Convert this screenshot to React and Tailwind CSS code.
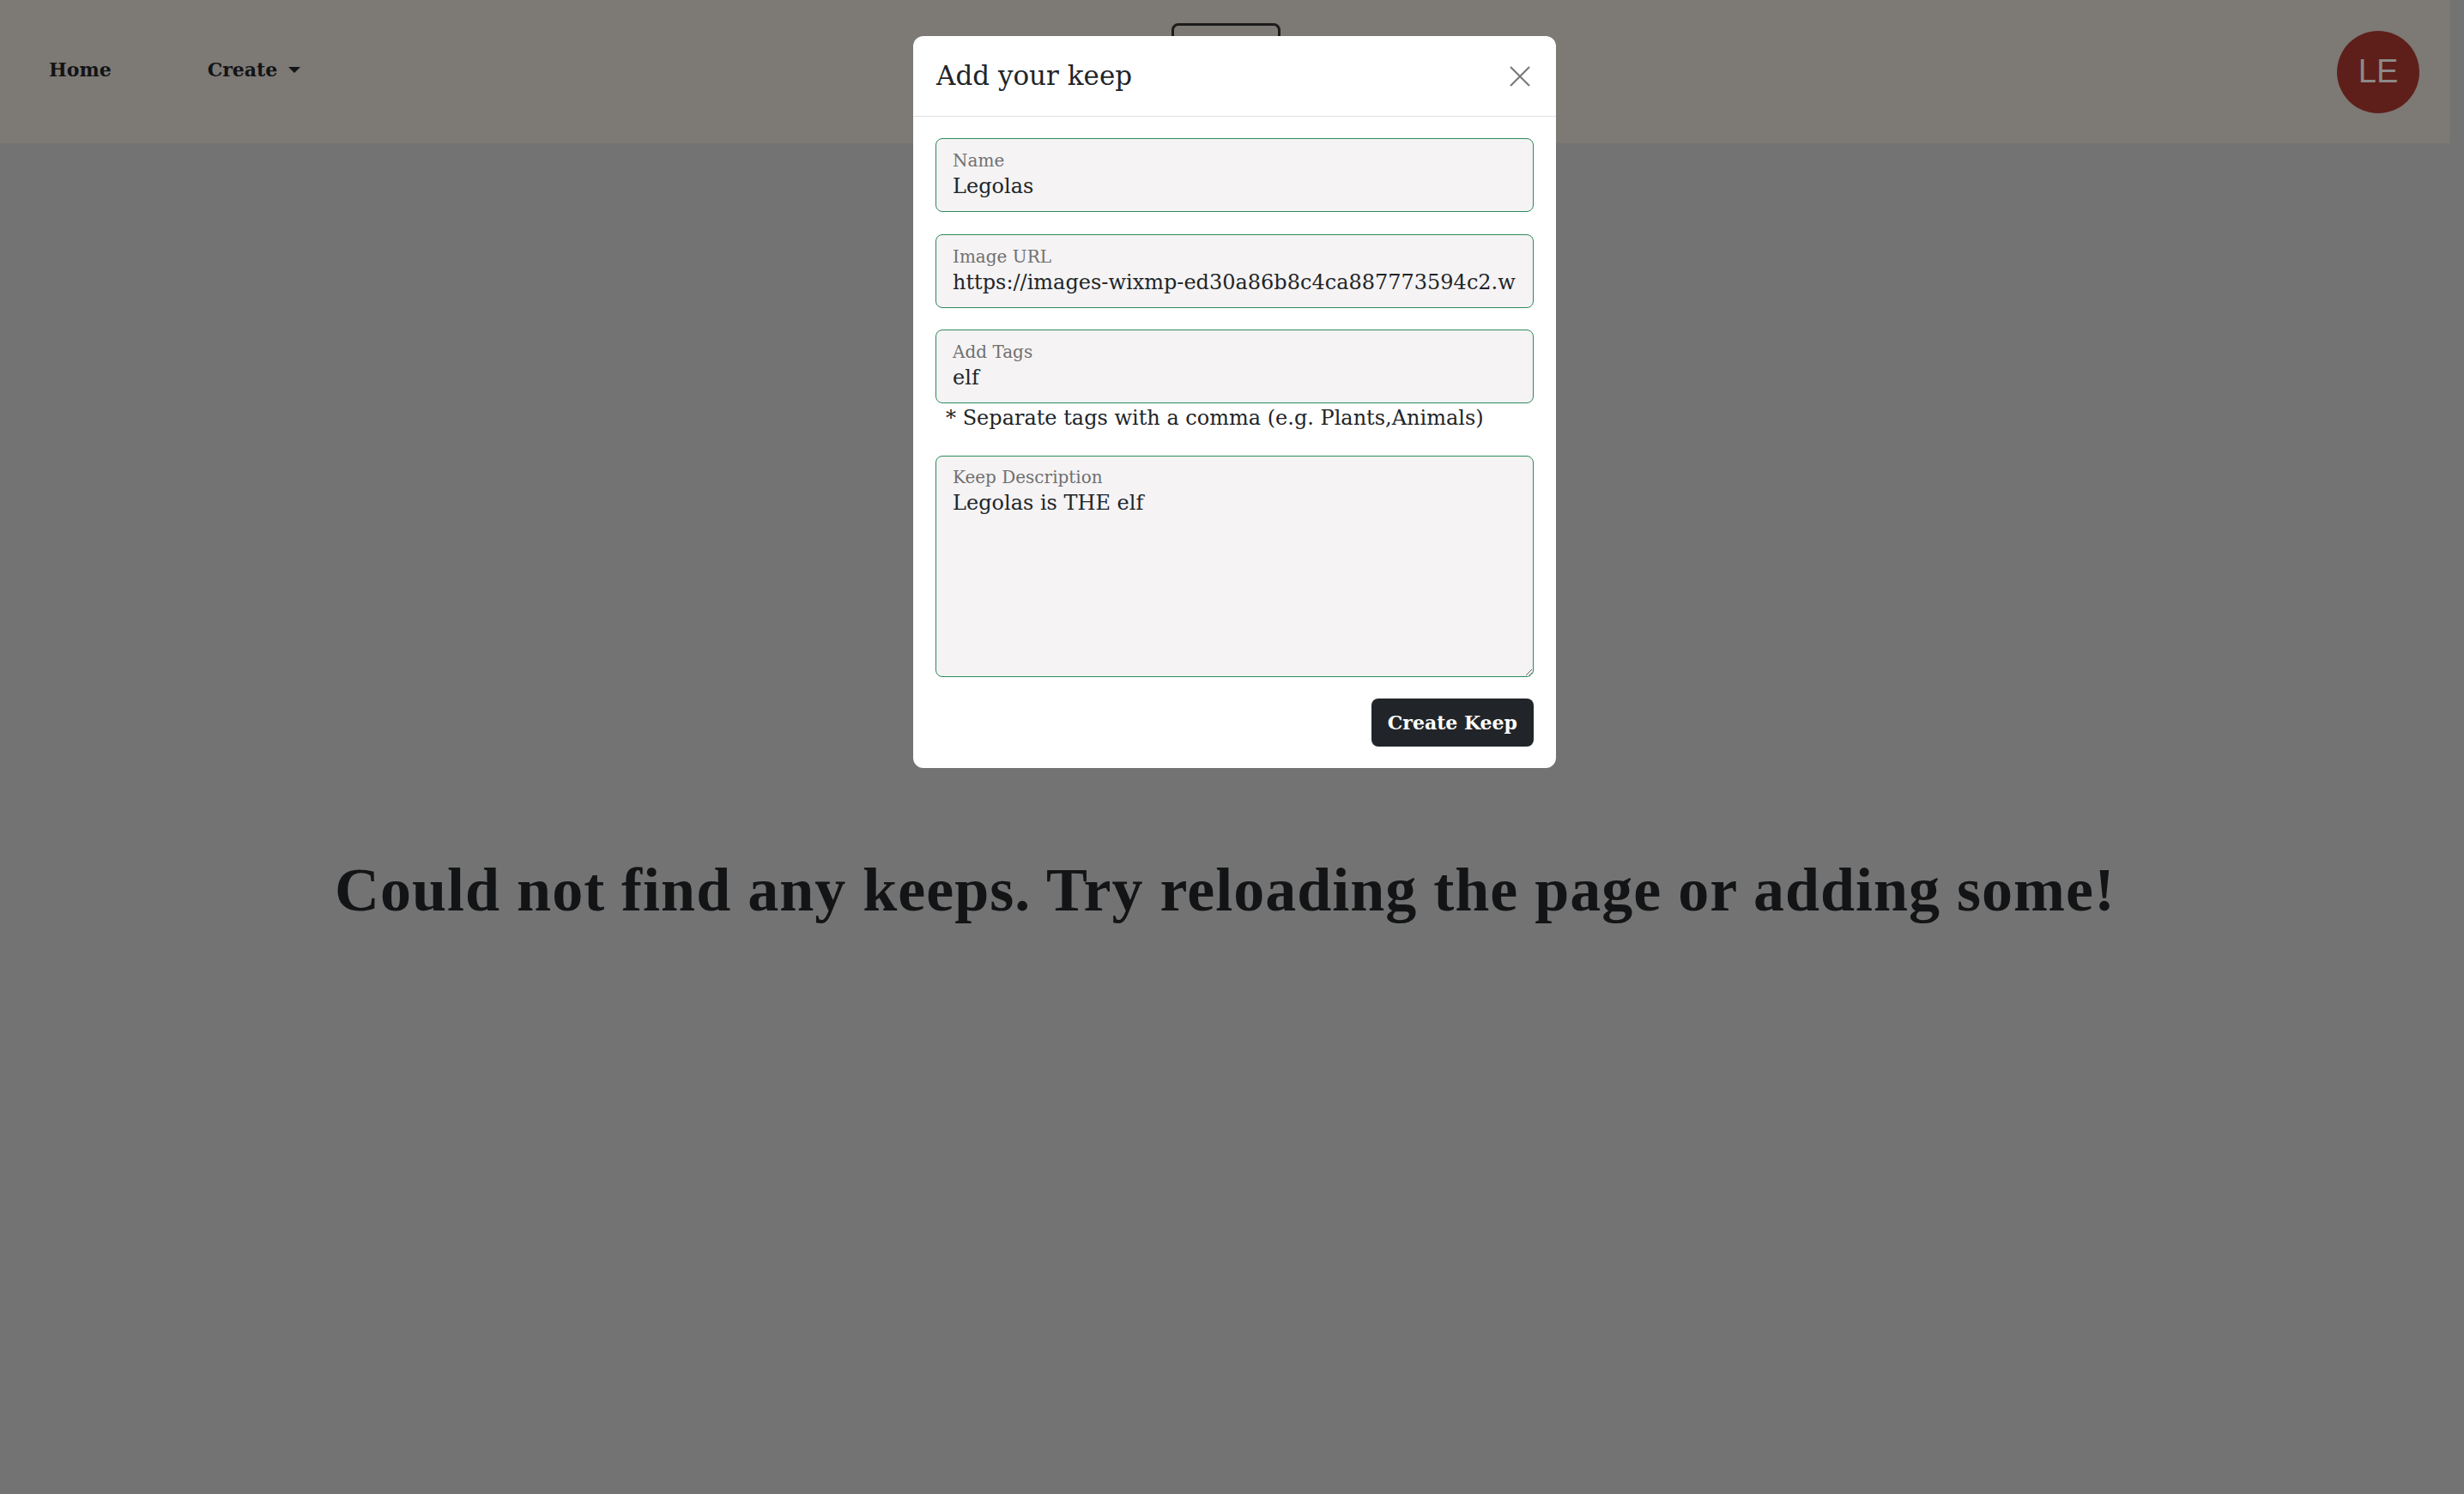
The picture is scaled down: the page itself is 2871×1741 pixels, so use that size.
import React from 'react'

const serif = { fontFamily: '"DejaVu Serif", "Liberation Serif", serif' }

const FloatingInput = ({ label, value }) => {
  return (
    <div className="relative h-[86px] w-full rounded-[8px] border border-[#2f8a5a] bg-[#f5f3f4]">
      <label className="absolute left-[19px] top-[13px] text-[20px] leading-[24px] text-[#707070]">
        {label}
      </label>
      <div className="absolute left-[19px] right-[19px] top-[39px] overflow-hidden whitespace-nowrap text-[24px] leading-[32px] text-[#212529]">
        {value}
      </div>
    </div>
  )
}

const App = () => {
  return (
    <div className="relative min-h-screen w-full bg-[#737373] text-[#121416]" style={serif}>
      <div className="w-[calc(100%-16px)]">
        {/* Navbar */}
        <nav className="relative flex h-[167px] items-center bg-[#7d7975] pb-[4px] pl-[57px] pr-[36px]">
          <a className="text-[22px] font-bold text-[#121416]">Home</a>
          <div className="ml-[112px] flex items-center gap-[13px]">
            <span className="text-[22px] font-bold text-[#121416]">Create</span>
            <svg width="14" height="7" viewBox="0 0 14 7">
              <path d="M0 0 L14 0 L7 7 Z" fill="#121416" />
            </svg>
          </div>
          <div className="flex flex-1 justify-center pr-[216px]">
            <div className="mt-[4px] h-[113px] w-[127px] rounded-[8px] border-[3px] border-[#1c1c1c]" />
          </div>
          <div className="mt-[4px] flex h-[96px] w-[96px] items-center justify-center rounded-full bg-[#5e1f1a]">
            <span className="text-[38px] text-[#8c8a88]" style={{ fontFamily: '"Liberation Sans", Arial, sans-serif' }}>
              LE
            </span>
          </div>
        </nav>

        {/* Empty state */}
        <main className="flex justify-center pt-[834px] pb-[600px]">
          <h1
            className="text-[72px] font-bold leading-none tracking-[1px] text-[#121416]"
            style={{ fontFamily: '"Liberation Serif", "DejaVu Serif", serif' }}
          >
            Could not find any keeps. Try reloading the page or adding some!
          </h1>
        </main>
      </div>

      {/* Modal */}
      <div className="absolute left-[1064px] top-[42px] w-[749px] rounded-[12px] bg-white">
        <div className="flex h-[94px] items-center justify-between border-b border-[#dee2e6] px-[27px]">
          <h5 className="text-[31px] leading-none text-[#212529]">Add your keep</h5>
          <button className="flex h-[30px] w-[30px] items-center justify-center">
            <svg width="24" height="24" viewBox="0 0 24 24">
              <path d="M1 1 L23 23 M23 1 L1 23" stroke="#7a7a7a" strokeWidth="2.2" />
            </svg>
          </button>
        </div>
        <div className="flex flex-col px-[26px] pt-[25px] pb-[25px]">
          <FloatingInput label="Name" value="Legolas" />
          <div className="mt-[26px]">
            <FloatingInput label="Image URL" value="https://images-wixmp-ed30a86b8c4ca887773594c2.w" />
          </div>
          <div className="mt-[25px]">
            <FloatingInput label="Add Tags" value="elf" />
          </div>
          <p className="mt-[2px] pl-[12px] text-[24px] leading-[30px] text-[#212529]">
            * Separate tags with a comma (e.g. Plants,Animals)
          </p>
          <div className="relative mt-[29px]">
            <label className="absolute left-[20px] top-[13px] z-10 text-[20px] leading-[24px] text-[#707070]">
              Keep Description
            </label>
            <textarea
              readOnly
              value="Legolas is THE elf"
              className="block h-[258px] w-full resize-y rounded-[8px] border border-[#2f8a5a] bg-[#f5f3f4] px-[19px] pt-[38px] text-[24px] leading-[32px] text-[#212529] outline-none"
              style={serif}
            />
          </div>
          <div className="mt-[25px] flex justify-end">
            <button className="h-[56px] rounded-[8px] bg-[#212529] px-[19px] text-[22px] font-bold text-white">
              Create Keep
            </button>
          </div>
        </div>
      </div>
    </div>
  )
}

export default App
